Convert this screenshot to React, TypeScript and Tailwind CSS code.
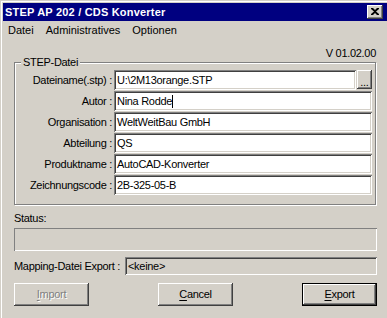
import React from "react";

const sunken =
  "shadow-[inset_1px_1px_0_#808080,inset_-1px_-1px_0_#ffffff,inset_2px_2px_0_#404040,inset_-2px_-2px_0_#d4d0c8]";
const raised =
  "shadow-[inset_-1px_-1px_0_#404040,inset_1px_1px_0_#ffffff,inset_-2px_-2px_0_#808080]";

const fields = [
  { label: "Dateiname(.stp)", value: "U:\\2M13orange.STP", browse: true },
  { label: "Autor", value: "Nina Rodde", caret: true },
  { label: "Organisation", value: "WeltWeitBau GmbH" },
  { label: "Abteilung", value: "QS" },
  { label: "Produktname", value: "AutoCAD-Konverter" },
  { label: "Zeichnungscode", value: "2B-325-05-B" },
];

const Button: React.FC<{ hot: string; rest: string; disabled?: boolean; isDefault?: boolean }> = ({
  hot,
  rest,
  disabled,
  isDefault,
}) => (
  <div className={`w-[75px] h-[23px] ${isDefault ? "border border-black" : ""}`}>
    <div className={`w-full h-full flex items-center justify-center ${raised}`}>
      <span
        className={
          disabled ? "text-[#808080] [text-shadow:1px_1px_0_#ffffff]" : "text-black"
        }
      >
        <span className="underline underline-offset-2">{hot}</span>
        {rest}
      </span>
    </div>
  </div>
);

export default function App() {
  return (
    <div className="w-[387px] h-[318px] overflow-hidden bg-[#d4d0c8] pt-px pl-px font-['Liberation_Sans',Arial,sans-serif] text-[11px] leading-[13px] text-black">
      <div className="h-full border-t border-l border-white pt-px pl-px flex flex-col">
        {/* title bar */}
        <div className="h-[18px] bg-[#000080] flex items-center justify-between pl-[2px] pr-[4px]">
          <span className="text-white font-bold tracking-[0.2px]">STEP AP 202 / CDS Konverter</span>
          <div className={`w-[16px] h-[14px] bg-[#d4d0c8] flex items-center justify-center ${raised}`}>
            <svg width="8" height="7" viewBox="0 0 8 7" className="-mt-px">
              <path d="M0 0h2l2 2 2-2h2v1L5 3.5 8 6v1H6L4 5 2 7H0V6l3-2.5L0 1z" fill="#000" />
            </svg>
          </div>
        </div>

        {/* menu */}
        <div className="h-[19px] flex items-center pl-[5px] gap-[12px]">
          <span>Datei</span>
          <span>Administratives</span>
          <span>Optionen</span>
        </div>

        <div className="pl-[11px] w-[374px] flex flex-col tracking-[-0.3px]">
          <div className="mt-[7px] w-[362px] text-right">V 01.02.00</div>

          {/* group box */}
          <div className="relative mt-[2px] w-[362px] border border-[#808080] shadow-[1px_1px_0_#ffffff,inset_1px_1px_0_#ffffff] pt-[7px] pb-[9px] flex flex-col gap-px">
            <span className="absolute -top-[7px] left-[6px] px-[2px] bg-[#d4d0c8]">STEP-Datei</span>
            {fields.map((f) => (
              <div key={f.label} className="flex items-center h-[20px]">
                <div className="w-[99px] pr-[2px] text-right whitespace-nowrap">{f.label} :</div>
                <div className="flex w-[258px] h-full gap-px">
                  <div className={`flex-1 h-full bg-white flex items-center pl-[3px] ${sunken}`}>
                    <span className="whitespace-nowrap">{f.value}</span>
                    {f.caret && <span className="w-px h-[13px] bg-black" />}
                  </div>
                  {f.browse && (
                    <div className={`w-[15px] h-[19px] flex items-end justify-center pb-[3px] ${raised}`}>
                      <span className="leading-[8px]">...</span>
                    </div>
                  )}
                </div>
              </div>
            ))}
          </div>

          <div className="mt-[7px]">Status:</div>
          <div className="mt-[3px] w-[363px] h-[23px] shadow-[inset_1px_1px_0_#808080,inset_-1px_-1px_0_#ffffff]" />

          <div className="mt-[6px] w-[363px] flex items-center">
            <span className="w-[111px] whitespace-nowrap">Mapping-Datei Export :</span>
            <div className={`flex-1 h-[18px] flex items-center pl-[3px] ${sunken}`}>&lt;keine&gt;</div>
          </div>

          <div className="mt-[8px] w-[363px] flex justify-between">
            <Button hot="I" rest="mport" disabled />
            <Button hot="C" rest="ancel" />
            <Button hot="E" rest="xport" isDefault />
          </div>
        </div>
      </div>
    </div>
  );
}
